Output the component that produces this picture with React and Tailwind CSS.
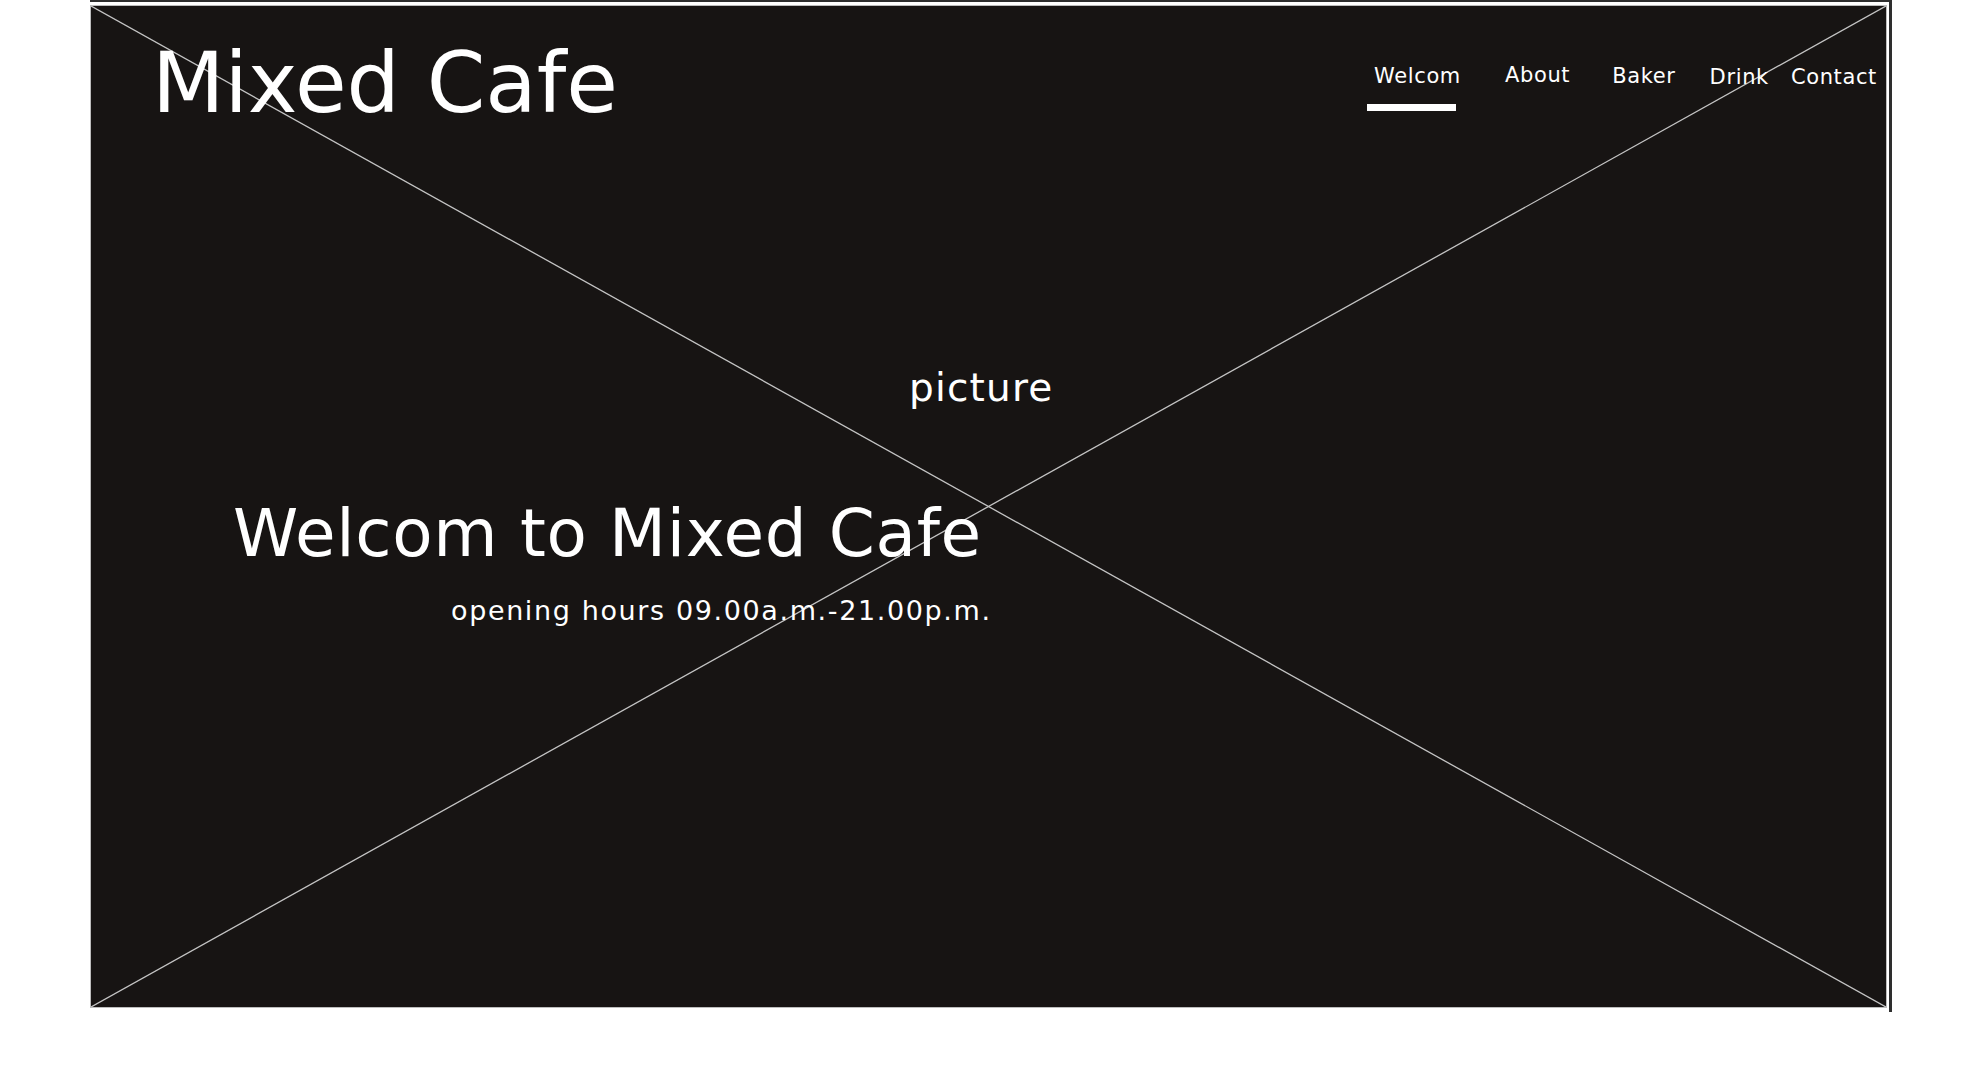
import React from 'react';

const navItems = [
  { label: 'Welcom', active: true, cls: '' },
  { label: 'About', cls: 'ml-[44px] -mt-[1px]' },
  { label: 'Baker', cls: 'ml-[42px]' },
  { label: 'Drink', cls: 'ml-[34px] mt-[1px]' },
  { label: 'Contact', cls: 'ml-[22px] mt-[1px]' },
];

const Cross = () => (
  <svg
    className="absolute inset-0 h-full w-full pointer-events-none"
    viewBox="0 0 100 100"
    preserveAspectRatio="none"
  >
    <line x1="0" y1="0" x2="100" y2="100" stroke="#c4c4c4" strokeWidth="1.3" vectorEffect="non-scaling-stroke" />
    <line x1="0" y1="100" x2="100" y2="0" stroke="#c4c4c4" strokeWidth="1.3" vectorEffect="non-scaling-stroke" />
  </svg>
);

const App = () => {
  return (
    <div className="min-h-[1069px] w-full bg-white font-['DejaVu_Sans',sans-serif]">
      <div className="ml-[90px] w-[1802px] h-[1012px] border-t-2 border-r-[3px] border-[#2e2e2e] pt-[3px] pr-[2px] pb-[4px]">
        <div className="relative h-full border border-[#bdbdbd] bg-[#171413] text-white">
          <Cross />

          <header className="relative flex items-start justify-between pt-[35px] pl-[61px] pr-[9px]">
            <h1 className="text-[84px] leading-none">Mixed Cafe</h1>
            <nav className="mt-[25px] flex items-start">
              {navItems.map(({ label, active, cls }) => (
                <a key={label} className={`flex flex-col items-start text-[21px] leading-none tracking-[0.03em] ${cls}`}>
                  <span>{label}</span>
                  {active && <span className="mt-[17px] -ml-[7px] h-[7px] w-[89px] bg-white" />}
                </a>
              ))}
            </nav>
          </header>

          <section className="relative flex flex-col items-start">
            <p className="ml-[818px] mt-[243px] text-[39px] leading-none tracking-[0.03em]">picture</p>
            <h2 className="ml-[142px] mt-[94px] text-[66px] leading-none tracking-[0.01em]">Welcom to Mixed Cafe</h2>
            <p className="ml-[360px] mt-[30px] text-[27px] leading-none tracking-[0.06em]">
              opening hours 09.00a.m.-21.00p.m.
            </p>
          </section>
        </div>
      </div>
    </div>
  );
};

export default App;
